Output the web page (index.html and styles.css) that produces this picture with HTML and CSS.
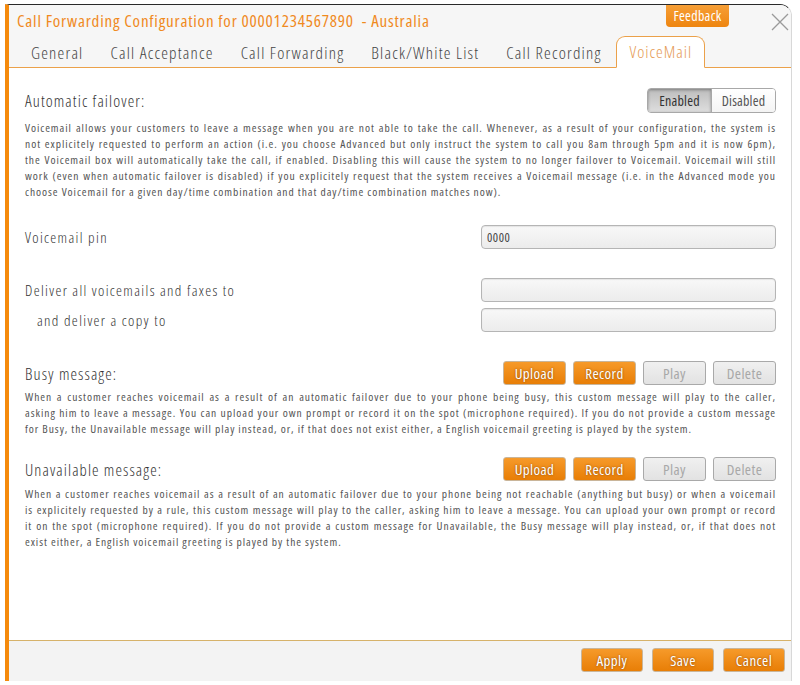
FILE: index.html
```html
<!DOCTYPE html>
<html>
<head>
<meta charset="utf-8">
<link rel="stylesheet" href="styles.css">
</head>
<body>
<div class="dialog">
  <div class="header">
    <div class="title">Call Forwarding Configuration for 00001234567890&nbsp; - Australia</div>
    <button class="feedback">Feedback</button>
    <span class="close">
      <svg width="18" height="18" viewBox="0 0 18 18"><path d="M1 1 L17 17 M17 1 L1 17" stroke="#9a9a9a" stroke-width="1.3" fill="none"/></svg>
    </span>
    <div class="tabs">
      <div class="tab">General</div>
      <div class="tab">Call Acceptance</div>
      <div class="tab">Call Forwarding</div>
      <div class="tab">Black/White List</div>
      <div class="tab">Call Recording</div>
      <div class="tab active">VoiceMail</div>
    </div>
  </div>
  <div class="content">
    <div class="row r-failover">
      <div class="label big">Automatic failover:</div>
      <div class="toggle">
        <span class="seg on">Enabled</span><span class="seg">Disabled</span>
      </div>
    </div>
    <div class="para p1">
      <span class="jl">Voicemail allows your customers to leave a message when you are not able to take the call. Whenever, as a result of your configuration, the system is</span>
      <span class="jl">not explicitely requested to perform an action (i.e. you choose Advanced but only instruct the system to call you 8am through 5pm and it is now 6pm),</span>
      <span class="jl">the Voicemail box will automatically take the call, if enabled. Disabling this will cause the system to no longer failover to Voicemail. Voicemail will still</span>
      <span class="jl">work (even when automatic failover is disabled) if you explicitely request that the system receives a Voicemail message (i.e. in the Advanced mode you</span>
      <span class="ll">choose Voicemail for a given day/time combination and that day/time combination matches now).</span>
    </div>
    <div class="row r-pin">
      <div class="label">Voicemail pin</div>
      <input class="field" type="text" value="0000">
    </div>
    <div class="row r-deliver">
      <div class="label">Deliver all voicemails and faxes to</div>
      <input class="field" type="text" value="">
    </div>
    <div class="row r-copy">
      <div class="label indent">and deliver a copy to</div>
      <input class="field" type="text" value="">
    </div>
    <div class="row r-busy">
      <div class="label big">Busy message:</div>
      <div class="btns">
        <button class="btn orange">Upload</button>
        <button class="btn orange">Record</button>
        <button class="btn off">Play</button>
        <button class="btn off">Delete</button>
      </div>
    </div>
    <div class="para p2">
      <span class="jl">When a customer reaches voicemail as a result of an automatic failover due to your phone being busy, this custom message will play to the caller,</span>
      <span class="jl">asking him to leave a message. You can upload your own prompt or record it on the spot (microphone required). If you do not provide a custom message</span>
      <span class="ll">for Busy, the Unavailable message will play instead, or, if that does not exist either, a English voicemail greeting is played by the system.</span>
    </div>
    <div class="row r-unav">
      <div class="label big">Unavailable message:</div>
      <div class="btns">
        <button class="btn orange">Upload</button>
        <button class="btn orange">Record</button>
        <button class="btn off">Play</button>
        <button class="btn off">Delete</button>
      </div>
    </div>
    <div class="para p3">
      <span class="jl">When a customer reaches voicemail as a result of an automatic failover due to your phone being not reachable (anything but busy) or when a voicemail</span>
      <span class="jl">is explicitely requested by a rule, this custom message will play to the caller, asking him to leave a message. You can upload your own prompt or record</span>
      <span class="jl">it on the spot (microphone required). If you do not provide a custom message for Unavailable, the Busy message will play instead, or, if that does not</span>
      <span class="ll">exist either, a English voicemail greeting is played by the system.</span>
    </div>
  </div>
  <div class="footer">
    <button class="btn orange fbtn">Apply</button>
    <button class="btn orange fbtn">Save</button>
    <button class="btn orange fbtn">Cancel</button>
  </div>
</div>
</body>
</html>
```
FILE: styles.css
```css
html, body {
  margin: 0;
  padding: 0;
  background: #ffffff;
}
body {
  font-family: "Open Sans", "DejaVu Sans Condensed", sans-serif;
  font-stretch: 75%;
  font-weight: 400;
  color: #444;
}
button, input {
  font-family: inherit;
  font-stretch: inherit;
}
.dialog {
  position: relative;
  margin: 4px 0 0 5px;
  width: 787px;
  height: 677px;
  box-sizing: border-box;
  border-top: 1.5px solid #2a2a2a;
  border-left: 4px solid #f58a0c;
  border-right: 1px solid #d8d8d8;
  border-top-right-radius: 12px;
  display: flex;
  flex-direction: column;
  overflow: hidden;
}
.header {
  position: relative;
  background: #f6f6f6;
  height: 63px;
  box-sizing: border-box;
  border-bottom: 1px solid #eba14a;
  display: flex;
  flex-direction: column;
}
.title {
  color: #f08a1e;
  font-size: 17px;
  letter-spacing: 0.8px;
  line-height: 22px;
  padding: 5px 0 0 8px;
  height: 32px;
  box-sizing: border-box;
  white-space: nowrap;
}
.feedback {
  position: absolute;
  top: -2px;
  left: 657px;
  width: 63px;
  height: 24px;
  border: none;
  border-radius: 0 0 4px 4px;
  background: linear-gradient(#f7a13a, #ee8510);
  color: #fff;
  font-size: 14px;
  letter-spacing: 0.3px;
  padding: 0;
}
.close {
  position: absolute;
  top: 8px;
  left: 762px;
  width: 18px;
  height: 18px;
}
.close svg { display: block; }
.tabs {
  display: flex;
  align-items: flex-end;
  padding-left: 8px;
  height: 31px;
  margin-bottom: -1px;
  white-space: nowrap;
}
.tab {
  font-size: 17px;
  font-weight: 300;
  letter-spacing: 1.2px;
  color: #444;
  padding: 0 12px 0 13px;
  height: 31px;
  line-height: 30px;
  box-sizing: border-box;
  border: 1px solid transparent;
  border-bottom: none;
}
.tab.active {
  background: #fff;
  border: 1px solid #eba14a;
  border-bottom: 1px solid #fff;
  border-radius: 9px 9px 0 0;
  color: #e59a55;
  letter-spacing: 1px;
  height: 32px;
  padding: 0 12px 0 13px;
  margin-left: 1px;
}
.content {
  background: #fff;
  height: 572px;
  box-sizing: border-box;
  padding: 20px 15px 0 16px;
}
.row {
  display: flex;
  justify-content: space-between;
  align-items: center;
}
.label {
  font-size: 15px;
  font-weight: 300;
  letter-spacing: 1.35px;
  color: #333;
  white-space: nowrap;
}
.label.big {
  font-size: 16.5px;
  letter-spacing: 1.1px;
}
.label.indent { padding-left: 12px; }
.toggle {
  display: flex;
  height: 25px;
  box-sizing: border-box;
  border: 1px solid #a8a8a8;
  border-radius: 4px;
  overflow: hidden;
}
.seg {
  width: 63px;
  text-align: center;
  font-size: 14px;
  letter-spacing: 0.2px;
  line-height: 23px;
  color: #555;
  background: linear-gradient(#ffffff, #f4f4f4);
}
.seg.on {
  background: linear-gradient(#bdbdbd, #dedede);
  box-shadow: inset 0 1px 3px rgba(0,0,0,0.35);
  border-right: 1px solid #a8a8a8;
  color: #333;
}
.para {
  font-size: 11.5px;
  letter-spacing: 0.95px;
  line-height: 16px;
  color: #555;
}
.jl {
  display: block;
  text-align: justify;
  text-align-last: justify;
  white-space: nowrap;
}
.ll { display: block; white-space: nowrap; }
.p1 { margin-top: 7px; }
.r-pin { margin-top: 25px; }
.r-deliver { margin-top: 29px; }
.r-copy { margin-top: 6px; }
.r-busy { margin-top: 29px; }
.p2 { margin-top: 4px; }
.r-unav { margin-top: 20px; }
.p3 { margin-top: 5px; }
.field {
  width: 295px;
  height: 24px;
  box-sizing: border-box;
  border: 1px solid #b5b5b5;
  border-radius: 4px;
  background: linear-gradient(#f8f8f8, #ececec);
  box-shadow: inset 0 1px 1px rgba(0,0,0,0.08);
  font-size: 12.5px;
  letter-spacing: 0.5px;
  color: #444;
  padding: 0 5px;
  margin: 0;
  outline: none;
}
.btns {
  display: flex;
  gap: 7px;
}
.btn {
  width: 63px;
  height: 24px;
  box-sizing: border-box;
  border-radius: 3px;
  font-size: 15px;
  letter-spacing: 0.4px;
  padding: 0;
  margin: 0;
  line-height: 22px;
}
.btn.orange {
  border: 1px solid #c9b59a;
  background: linear-gradient(#f69a2a, #e87e06);
  color: #fff;
  text-shadow: 0 0 2px rgba(90,40,0,0.7);
}
.btn.off {
  border: 1px solid #a9a9a9;
  background: linear-gradient(#f0f0f0, #e2e2e2);
  color: #a8a8a8;
}
.footer {
  flex: 1;
  background: #f3f3f3;
  border-top: 1.5px solid #d6b26a;
  display: flex;
  justify-content: flex-end;
  align-items: flex-start;
  gap: 9px;
  padding: 7px 6px 0 0;
}
.fbtn { width: 62px; }
```
